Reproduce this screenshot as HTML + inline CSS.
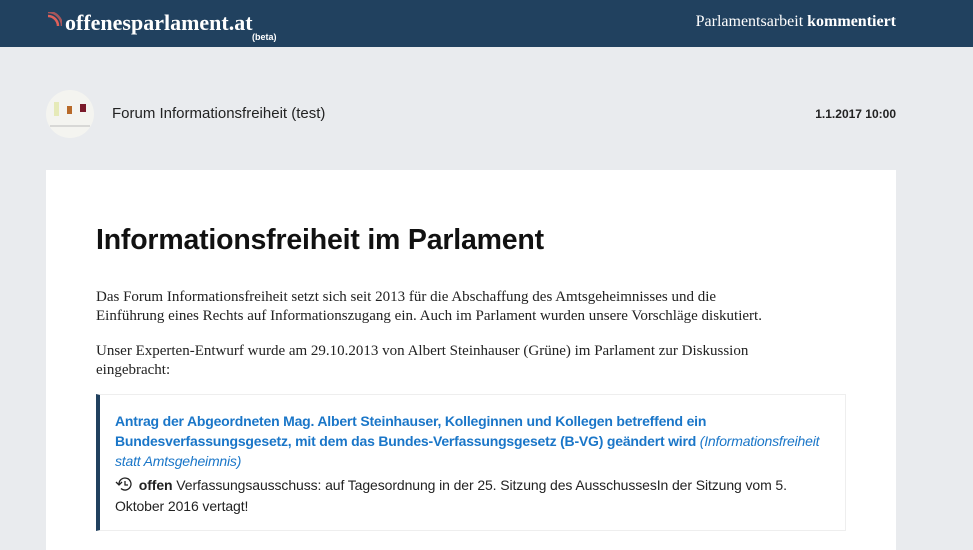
<!DOCTYPE html>
<html><head><meta charset="utf-8"><style>
body{margin:0;width:973px;height:540px;overflow:hidden;background:#e9ebee;font-family:"Liberation Sans",sans-serif;}
.top{height:47px;background:#21415f;position:relative;color:#fff;}
.logo{position:absolute;left:65px;top:10px;font-family:"Liberation Serif",serif;font-size:22px;font-weight:bold;}
.beta{position:absolute;left:252px;top:32px;font-size:9px;font-weight:bold;}
.tag{position:absolute;right:77px;top:13px;font-family:"Liberation Serif",serif;font-size:16px;font-weight:bold;}
.tag span{font-weight:normal;}
.av{position:absolute;left:46px;top:90px;width:48px;height:48px;border-radius:50%;background:#f4f4f0;overflow:hidden;}
.forum{position:absolute;left:112px;top:105px;font-size:15px;color:#222;}
.date{position:absolute;right:77px;top:107px;font-size:12px;font-weight:bold;color:#222;}
.card{position:absolute;left:46px;top:170px;width:850px;height:380px;background:#fff;}
h1{position:absolute;left:50px;top:54px;margin:0;font-size:28.5px;font-weight:bold;color:#111;letter-spacing:-0.2px;}
.p{position:absolute;left:50px;width:688px;font-family:"Liberation Serif",serif;font-size:15px;line-height:19px;color:#222;}
.q{position:absolute;left:50px;top:224px;width:750px;height:137px;border:1px solid #eee;border-left:4px solid #21415f;box-sizing:border-box;}
.qt{position:absolute;left:15px;top:16px;width:725px;font-size:14px;line-height:20px;font-weight:bold;color:#1a76c8;letter-spacing:-0.2px;}
.qt i{font-weight:normal;}
.st{position:absolute;left:15px;top:80px;width:690px;font-size:14px;line-height:21px;color:#222;letter-spacing:-0.1px;}
</style></head><body>
<div class="top">
<svg style="position:absolute;left:46px;top:12px" width="16" height="16" viewBox="0 0 16 16"><path d="M2 4a10 10 0 0 1 10 10" stroke="#e0605a" stroke-width="2.5" fill="none"/><path d="M2 0a14 14 0 0 1 14 14" stroke="#e0605a" stroke-width="2.5" fill="none" opacity=".7"/></svg>
<div class="logo">offenesparlament.at</div><div class="beta">(beta)</div>
<div class="tag"><span>Parlamentsarbeit</span> kommentiert</div></div>
<div class="av"><svg width="48" height="48"><rect x="8" y="12" width="5" height="14" fill="#e6eab8"/><rect x="21" y="16" width="5" height="8" fill="#b86a2a"/><rect x="34" y="14" width="6" height="8" fill="#7a1a2a"/><line x1="4" y1="36" x2="44" y2="36" stroke="#bbb"/></svg></div>
<div class="forum">Forum Informationsfreiheit (test)</div>
<div class="date">1.1.2017 10:00</div>
<div class="card">
<h1>Informationsfreiheit im Parlament</h1>
<div class="p" style="top:118px">Das Forum Informationsfreiheit setzt sich seit 2013 für die Abschaffung des Amtsgeheimnisses und die Einführung eines Rechts auf Informationszugang ein. Auch im Parlament wurden unsere Vorschläge diskutiert.</div>
<div class="p" style="top:172px">Unser Experten-Entwurf wurde am 29.10.2013 von Albert Steinhauser (Grüne) im Parlament zur Diskussion eingebracht:</div>
<div class="q"><div class="qt">Antrag der Abgeordneten Mag. Albert Steinhauser, Kolleginnen und Kollegen betreffend ein Bundesverfassungsgesetz, mit dem das Bundes-Verfassungsgesetz (B-VG) geändert wird <i>(Informationsfreiheit statt Amtsgeheimnis)</i></div>
<div class="st"><svg width="20" height="14" viewBox="0 0 20 14" style="vertical-align:-1px"><path d="M4 7a6 6 0 1 1 2 4.5" stroke="#222" stroke-width="1.3" fill="none"/><path d="M1 5l3 3 3-3" stroke="#222" stroke-width="1.3" fill="none"/><path d="M10 4v4h3" stroke="#222" stroke-width="1.3" fill="none"/></svg> <b>offen</b> Verfassungsausschuss: auf Tagesordnung in der 25. Sitzung des AusschussesIn der Sitzung vom 5. Oktober 2016 vertagt!</div></div>
</div>
</body></html>
